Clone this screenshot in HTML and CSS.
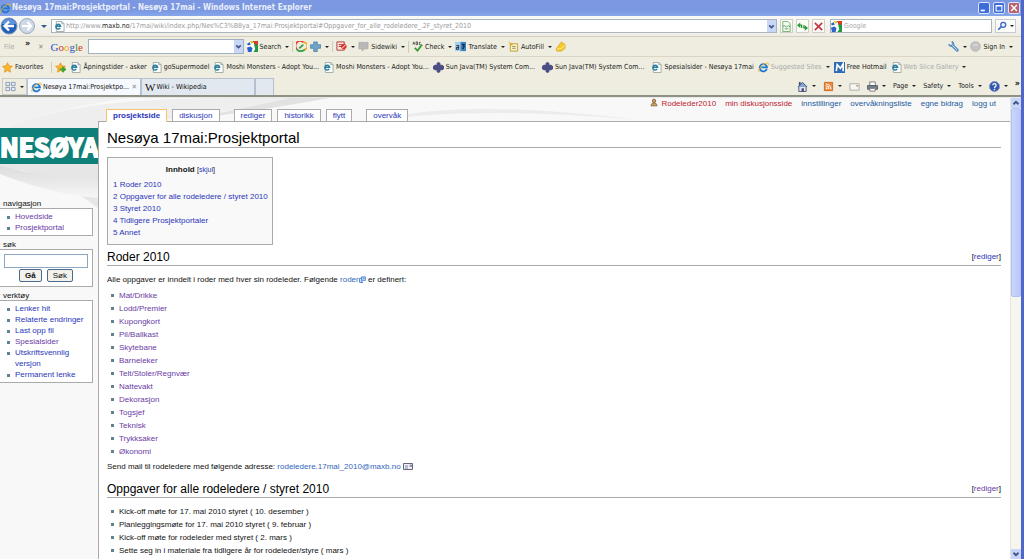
FILE: index.html
```html
<!DOCTYPE html>
<html lang="no">
<head>
<meta charset="utf-8">
<title>Nesøya 17mai:Prosjektportal - Nesøya 17mai</title>
<link rel="stylesheet" href="styles.css">
</head>
<body>
<svg class="defs" aria-hidden="true">
  <symbol id="ie" viewBox="0 0 12 12"><path d="M9.6 7.6A4 4 0 1 1 9.8 5.8H3.6" fill="none" stroke="#1d78cf" stroke-width="2"/><path d="M1.2 11C-.6 8.500 5 1 10.500 1.200 12 1.400 11.400 3 10.600 4" fill="none" stroke="#f0b429" stroke-width="1"/></symbol>
  <symbol id="page" viewBox="0 0 12 12"><path d="M2.500.5h6l2.500 2.500v8.500h-8.500z" fill="#fff" stroke="#9aa7a5"/><path d="M6.800 7.600A2.600 2.600 0 1 1 7.200 5.700H2.500" fill="none" stroke="#2a7f9f" stroke-width="1.600"/><path d="M8.500.5V3H11" fill="none" stroke="#9aa7a5"/></symbol>
  <symbol id="star" viewBox="0 0 12 12"><path d="M6 .8l1.600 3.400 3.800.5-2.800 2.600.7 3.800L6 9.300l-3.300 1.800.7-3.800L.6 4.700l3.800-.5z" fill="#fcb72c" stroke="#d98a12" stroke-width=".7"/></symbol>
  <symbol id="staradd" viewBox="0 0 12 12"><use href="#star"/><path d="M5 8h5M8 5.500L11 8 8 10.800" fill="none" stroke="#3aa52c" stroke-width="2"/></symbol>
  <symbol id="java" viewBox="0 0 12 12"><path d="M4 1l2-1 2 1v2h2l2 1.500v3L10 9H8v2l-2 1-2-1V9H2L0 7.500v-3L2 3h2z" fill="#4b4f86"/></symbol>
  <symbol id="hotmail" viewBox="0 0 12 12"><path d="M0 0h12v12H0z" fill="#2c6bb5"/><path d="M2.500 10l1-7L7 7l3-5v8" fill="none" stroke="#fff" stroke-width="1.800"/></symbol>
  <symbol id="gfav" viewBox="0 0 12 12"><path d="M0 0h12v12H0z" fill="#fff"/><path d="M6 0h6v6z" fill="#d93a2b"/><path d="M7 0h5v12H7l2-3-1-4z" fill="#1f9a42"/><path d="M7 0h5v4H9z" fill="#d93a2b"/><path d="M0 7l4-1 2 2-1 4H1z" fill="#2f62c9"/><path d="M0 3l3-2 1 3-3 1z" fill="#2f62c9"/><path d="M3 0h3l1 2-2 1z" fill="#f3bd26"/></symbol>
  <symbol id="swirl" viewBox="0 0 12 12"><path d="M1 9A5 5 0 0 1 8 1.500" fill="none" stroke="#e8432e" stroke-width="2"/><path d="M8 1.500a4 4 0 0 1 1 8" fill="none" stroke="#f4a51e" stroke-width="2"/><path d="M1 9c2 3 6 2 8.500.5M3.500 8L8 4" fill="none" stroke="#35a048" stroke-width="2"/></symbol>
  <symbol id="plus" viewBox="0 0 12 12"><path d="M4 1h4v3h3.500v4H8v3.500H4V8H.5V4H4z" fill="#6fa3c9" stroke="#3c759d" stroke-width=".7"/></symbol>
  <symbol id="block" viewBox="0 0 12 12"><path d="M1 1h8v9H1z" fill="#f5e3e0" stroke="#b0362e"/><path d="M3 4h4M3 6h4" stroke="#b0362e"/><circle cx="8.500" cy="6" r="3" fill="#d8382d"/><path d="M6.500 8l4-4" stroke="#fff"/></symbol>
  <symbol id="bubble" viewBox="0 0 12 12"><path d="M1 1.500h10v7H7L4.500 11V8.500H1z" fill="#b8b8b8" stroke="#9c9c9c" stroke-width=".6"/></symbol>
  <symbol id="check" viewBox="0 0 12 12"><path d="M1 4l1-3 1 3M4.500 1v3H6V1zM9.500 1.500H8V4h1.500" fill="none" stroke="#333" stroke-width=".8"/><path d="M3 7.500l3 3L11 4" fill="none" stroke="#3d9c3b" stroke-width="2"/></symbol>
  <symbol id="translate" viewBox="0 0 12 12"><path d="M0 1h12v10H0z" fill="#a9d0ef"/><path d="M6 1h6v10H6z" fill="#3c86c6"/><path d="M1.500 5h2.500v4H1.500V7H4M7.500 4h3.500M9 3v6M8 8c2 0 3-2 2-3" fill="none" stroke="#123"/></symbol>
  <symbol id="autofill" viewBox="0 0 12 12"><path d="M2.500 3h8v8h-8z" fill="#fff4b8" stroke="#b39a3d"/><path d="M4.500 6h4M4.500 8h4" stroke="#8b8b8b"/><path d="M.5 0l5 4-2 1z" fill="#e8a51c"/></symbol>
  <symbol id="marker" viewBox="0 0 12 12"><path d="M1 9l6-8 4 3v4l-4 3H2z" fill="#f6c927" stroke="#d39b13" stroke-width=".7"/><path d="M2 9l5-1 4-3" fill="none" stroke="#fff0a0"/></symbol>
  <symbol id="wrench" viewBox="0 0 12 12"><path d="M5 5l5 5" stroke="#5a91c3" stroke-width="3.500" stroke-linecap="round"/><path d="M1 3.500A3 3 0 0 0 5.500 5 3 3 0 0 0 4 .8" fill="none" stroke="#5a91c3" stroke-width="2"/><path d="M4 4l6 6" stroke="#cfe3f3"/></symbol>
  <symbol id="ball" viewBox="0 0 12 12"><circle cx="6" cy="6" r="5.300" fill="#c3c3c3" stroke="#a4a4a4" stroke-width=".6"/><path d="M2.500 5a4 3 0 0 1 7 0z" fill="#e2e2e2"/></symbol>
  <symbol id="home" viewBox="0 0 12 12"><path d="M2 6h8v5.500H2z" fill="#dfe6f2" stroke="#46536f"/><path d="M2 1h2v4H2z" fill="#46536f"/><path d="M1 6.500L6 1.500l5 5" fill="#8ba3cf" stroke="#2f4d86"/><path d="M5 8h2.500v3.500H5z" fill="#4a3f7a"/></symbol>
  <symbol id="rss" viewBox="0 0 12 12"><path d="M1.500 1.500h9v9h-9z" fill="#f0863a" stroke="#c96a24"/><circle cx="4" cy="8" r="1" fill="#fff"/><path d="M3 5.500a3.500 3.500 0 0 1 3.500 3.500M3 3.200A5.800 5.800 0 0 1 8.800 9" fill="none" stroke="#fff" stroke-width="1.100"/></symbol>
  <symbol id="mail" viewBox="0 0 12 12"><path d="M1 3h10v7H1z" fill="#f7f7f4" stroke="#aaa"/><path d="M8 4.500h2v1.500H8z" fill="#c77"/></symbol>
  <symbol id="printer" viewBox="0 0 12 12"><path d="M3 1h6v4H3z" fill="#fff" stroke="#777"/><path d="M.5 5h11v4H.5z" fill="#77808c" stroke="#525a66"/><path d="M3 8h6v3H3z" fill="#fff" stroke="#777"/></symbol>
  <symbol id="help" viewBox="0 0 12 12"><circle cx="6" cy="6" r="5.500" fill="#3457ae" stroke="#8495c4"/><path d="M4.200 4.500c0-2.200 3.600-2.200 3.600 0C7.800 6 6 6 6 7.500M6 8.500V10" fill="none" stroke="#fff" stroke-width="1.400"/></symbol>
  <symbol id="chev" viewBox="0 0 12 12"><path d="M3 4.500l3 3 3-3" fill="none" stroke="#3d5687" stroke-width="2.200"/></symbol>
  <symbol id="up" viewBox="0 0 12 12"><path d="M3 7.500l3-3 3 3" fill="none" stroke="#3d5687" stroke-width="2.200"/></symbol>
  <symbol id="compat" viewBox="0 0 12 12"><path d="M2 .5h5.500L10 3v8.500H2z" fill="#f4fbf2" stroke="#6fae6a"/><path d="M2 6l1.500-1L6 6.500 8 5l2 1.500M4 8.500h4" fill="none" stroke="#5b9f57"/></symbol>
  <symbol id="refresh" viewBox="0 0 12 12"><path d="M5 7.500V4.500H3M7.500 4.500v3h2" fill="none" stroke="#2b9a38" stroke-width="1.500"/><path d="M0 4.500L3.500 1.500v6zM12 7.500L8.500 4.500v6z" fill="#2b9a38"/></symbol>
  <symbol id="stop" viewBox="0 0 12 12"><path d="M2 2l8 8M10 2l-8 8" stroke="#c8323e" stroke-width="1.700"/></symbol>
  <symbol id="lens" viewBox="0 0 12 12"><circle cx="7.500" cy="4.500" r="3" fill="#e8f1ff" stroke="#3b63c4" stroke-width="1.500"/><path d="M5.200 6.800L1.500 10.500" stroke="#3b63c4" stroke-width="2"/></symbol>
  <symbol id="quad" viewBox="0 0 12 12"><path d="M1 1.500h4v3.500H1zM7 1.500h4v3.500H7zM1 7h4v3.500H1zM7 7h4v3.500H7z" fill="#e9effa" stroke="#8796b4"/></symbol>
  <symbol id="back" viewBox="0 0 18 18"><circle cx="9" cy="9" r="8" fill="#2160ba" stroke="#8095b5"/><path d="M2 7a7 5 0 0 1 14 0z" fill="#5f94dc"/><path d="M14 9H5M9 4.500L4.500 9 9 13.500" fill="none" stroke="#fff" stroke-width="2.300"/></symbol>
  <symbol id="fwd" viewBox="0 0 18 18"><circle cx="9" cy="9" r="7.500" fill="#cfd8e6" stroke="#9aa9c0"/><path d="M4 9h9M9.500 5L13 9l-3.500 4" fill="none" stroke="#fff" stroke-width="2.200"/></symbol>
  <symbol id="user" viewBox="0 0 12 12"><circle cx="6" cy="3.500" r="2.500" fill="#e3a062" stroke="#5c4020"/><path d="M1.500 11c0-6 9-6 9 0z" fill="#c7a55d" stroke="#6d4b1d"/></symbol>
  <symbol id="ext" viewBox="0 0 12 12"><path d="M7 11H1V4h4" fill="none" stroke="#3374c9" stroke-width="1.500"/><path d="M4.500 1.500h6.500v6H7L4 9.500z" fill="#cfe3fb" stroke="#2a6fd0" stroke-width="1.300"/><path d="M6 6.500l3-3H6.500" fill="none" stroke="#2a6fd0"/></symbol>
</svg>

<header class="chrome">
  <div class="titlebar">
    <svg class="i"><use href="#ie"/></svg>
    <span class="title">Nesøya 17mai:Prosjektportal - Nesøya 17mai - Windows Internet Explorer</span>
    <div class="winbtns">
      <button class="wb" aria-label="Minimize"><svg viewBox="0 0 12 12"><path d="M2 9h5" stroke="#fff" stroke-width="2"/></svg></button>
      <button class="wb" aria-label="Maximize"><svg viewBox="0 0 12 12"><path d="M2.500 3h7v6.500h-7zM2 3.500h8" fill="none" stroke="#fff" stroke-width="1.300"/></svg></button>
      <button class="wb close" aria-label="Close"><svg viewBox="0 0 12 12"><path d="M2.500 2.500l7 7M9.500 2.500l-7 7" stroke="#fff" stroke-width="1.800"/></svg></button>
    </div>
  </div>

  <div class="address">
    <button class="nav" aria-label="Back"><svg><use href="#back"/></svg></button>
    <button class="nav" aria-label="Forward"><svg><use href="#fwd"/></svg></button>
    <button class="drop" aria-label="Recent pages"></button>
    <div class="field url">
      <svg class="i"><use href="#page"/></svg>
      <span class="urltext">http://www.<b>maxb.no</b>/17mai/wiki/index.php/Nes%C3%B8ya_17mai:Prosjektportal#Oppgaver_for_alle_rodeledere_.2F_styret_2010</span>
      <button class="combo" aria-label="Show addresses"><svg><use href="#chev"/></svg></button>
    </div>
    <button class="sq" aria-label="Compatibility view"><svg><use href="#compat"/></svg></button>
    <button class="sq" aria-label="Refresh"><svg><use href="#refresh"/></svg></button>
    <button class="sq" aria-label="Stop"><svg><use href="#stop"/></svg></button>
    <label class="field search"><svg class="i"><use href="#gfav"/></svg><input type="text" placeholder="Google" aria-label="Search the web"></label>
    <button class="go" aria-label="Search"><svg><use href="#lens"/></svg><i class="tri"></i></button>
  </div>

  <div class="google">
    <button class="file">File</button>
    <span class="more">»</span>
    <span class="closex">✕</span>
    <span class="glogo"><span class="c1">G</span><span class="c2">o</span><span class="c3">o</span><span class="c1">g</span><span class="c4">l</span><span class="c2">e</span></span>
    <div class="field gbox"><input type="text" aria-label="Google search"><button class="combo" aria-label="History"><svg><use href="#chev"/></svg></button></div>
    <button class="t"><svg class="i"><use href="#gfav"/></svg>Search<i class="tri"></i></button>
    <button class="t sep" aria-label="Chrome"><svg class="i"><use href="#swirl"/></svg></button>
    <button class="t" aria-label="Add"><svg class="i"><use href="#plus"/></svg><i class="tri"></i></button>
    <button class="t sep" aria-label="Popups"><svg class="i"><use href="#block"/></svg><i class="tri"></i></button>
    <button class="t"><svg class="i"><use href="#bubble"/></svg>Sidewiki<i class="tri"></i></button>
    <button class="t sep"><svg class="i"><use href="#check"/></svg>Check<i class="tri"></i></button>
    <button class="t"><svg class="i"><use href="#translate"/></svg>Translate<i class="tri"></i></button>
    <button class="t"><svg class="i"><use href="#autofill"/></svg>AutoFill<i class="tri"></i></button>
    <button class="t" aria-label="Highlight"><svg class="i"><use href="#marker"/></svg></button>
    <button class="t end" aria-label="Settings"><svg class="i"><use href="#wrench"/></svg><i class="tri"></i></button>
    <button class="t"><svg class="i"><use href="#ball"/></svg>Sign In<i class="tri"></i></button>
  </div>

  <nav class="favs">
    <button class="t"><svg class="i"><use href="#star"/></svg>Favorites</button>
    <button class="t sep" aria-label="Add favorite"><svg class="i"><use href="#staradd"/></svg></button>
    <a href="#" class="t"><svg class="i"><use href="#page"/></svg>Åpningstider - asker</a>
    <a href="#" class="t"><svg class="i"><use href="#page"/></svg>goSupermodel</a>
    <a href="#" class="t"><svg class="i"><use href="#page"/></svg>Moshi Monsters - Adopt You...</a>
    <a href="#" class="t"><svg class="i"><use href="#page"/></svg>Moshi Monsters - Adopt You...</a>
    <a href="#" class="t sun"><svg class="i"><use href="#java"/></svg>Sun Java(TM) System Com...</a>
    <a href="#" class="t sun"><svg class="i"><use href="#java"/></svg>Sun Java(TM) System Com...</a>
    <a href="#" class="t"><svg class="i"><use href="#page"/></svg>Spesialsider - Nesøya 17mai</a>
    <a href="#" class="t dim"><svg class="i"><use href="#ie"/></svg>Suggested Sites<i class="tri"></i></a>
    <a href="#" class="t"><svg class="i"><use href="#hotmail"/></svg>Free Hotmail</a>
    <a href="#" class="t dim"><svg class="i"><use href="#page"/></svg>Web Slice Gallery<i class="tri"></i></a>
  </nav>

  <div class="tabs">
    <button class="quick" aria-label="Quick tabs"><svg class="i"><use href="#quad"/></svg><i class="tri"></i></button>
    <button class="tab on"><svg class="i"><use href="#ie"/></svg><span>Nesøya 17mai:Prosjektpo...</span><span class="x">✕</span></button>
    <button class="tab"><span class="w">W</span>Wiki - Wikipedia</button>
    <button class="tab new" aria-label="New tab"></button>
    <div class="cmds">
      <button class="t" aria-label="Home"><svg class="i"><use href="#home"/></svg><i class="tri"></i></button>
      <button class="t" aria-label="Feeds"><svg class="i"><use href="#rss"/></svg><i class="tri"></i></button>
      <button class="t" aria-label="Mail"><svg class="i"><use href="#mail"/></svg></button>
      <button class="t" aria-label="Print"><svg class="i"><use href="#printer"/></svg><i class="tri"></i></button>
      <button class="t">Page<i class="tri"></i></button>
      <button class="t">Safety<i class="tri"></i></button>
      <button class="t">Tools<i class="tri"></i></button>
      <button class="t" aria-label="Help"><svg class="i"><use href="#help"/></svg><i class="tri"></i></button>
      <span class="more">»</span>
    </div>
  </div>
</header>

<div class="view">
  <div class="wiki">
    <svg class="swoosh" viewBox="0 0 1010 200" preserveAspectRatio="xMinYMin slice" aria-hidden="true">
      <defs>
        <linearGradient id="fade" x1="0" y1="0" x2="0" y2="1"><stop offset="0" stop-color="#dcdcdc"/><stop offset="1" stop-color="#f6f6f6"/></linearGradient>
      </defs>
      <path d="M0 0H130Q40 12 0 34z" fill="#f1f1f1"/>
      <path d="M0 34Q60 0 230 0H330Q160 20 98 34H0z" fill="#eeeeee"/>
      <path d="M180 22Q240 16 330 0H290Q230 14 180 22z" fill="#e2e2e2"/>
      <path d="M380 22Q460 0 640 22Q480 8 380 22z" fill="#ececec"/>
      <path d="M0 66H98V110Q40 66 0 72z" fill="#e6e6e6"/>
      <path d="M0 68Q50 80 98 82V100Q50 96 0 76z" fill="url(#fade)"/>
    </svg>
    <aside class="side">
      <a href="#" class="logo">NESØYA</a>
      <h5>navigasjon</h5>
      <ul class="box">
        <li><a href="#" class="v">Hovedside</a></li>
        <li><a href="#" class="v">Prosjektportal</a></li>
      </ul>
      <h5><label for="q">søk</label></h5>
      <form class="box find"><input id="q" type="text"><div><button type="button"><b>Gå</b></button><button type="button">Søk</button></div></form>
      <h5>verktøy</h5>
      <ul class="box">
        <li><a href="#">Lenker hit</a></li>
        <li><a href="#">Relaterte endringer</a></li>
        <li><a href="#">Last opp fil</a></li>
        <li><a href="#" class="v">Spesialsider</a></li>
        <li><a href="#">Utskriftsvennlig versjon</a></li>
        <li><a href="#">Permanent lenke</a></li>
      </ul>
    </aside>
    <div class="col">
      <nav class="personal">
        <svg class="i"><use href="#user"/></svg>
        <a href="#" class="red">Rodeleder2010</a>
        <a href="#" class="red">min diskusjonsside</a>
        <a href="#">innstillinger</a>
        <a href="#">overvåkningsliste</a>
        <a href="#">egne bidrag</a>
        <a href="#">logg ut</a>
      </nav>
      <nav class="views">
        <a href="#" class="sel">prosjektside</a>
        <a href="#" class="talk">diskusjon</a>
        <a href="#">rediger</a>
        <a href="#">historikk</a>
        <a href="#" class="move">flytt</a>
        <a href="#">overvåk</a>
      </nav>
      <main class="content">
        <h1>Nesøya 17mai:Prosjektportal</h1>
        <div class="toc">
          <p><b>Innhold</b> <small>[<a href="#">skjul</a>]</small></p>
          <a href="#">1 Roder 2010</a>
          <a href="#">2 Oppgaver for alle rodeledere / styret 2010</a>
          <a href="#">3 Styret 2010</a>
          <a href="#">4 Tidligere Prosjektportaler</a>
          <a href="#">5 Annet</a>
        </div>
        <h2>Roder 2010 <span>[<a href="#">rediger</a>]</span></h2>
        <p class="intro">Alle oppgaver er inndelt i roder med hver sin rodeleder. Følgende <a href="#" class="e">roder<svg class="s"><use href="#ext"/></svg></a> er definert:</p>
        <ul class="list">
          <li><a href="#">Mat/Drikke</a></li>
          <li><a href="#">Lodd/Premier</a></li>
          <li><a href="#">Kupongkort</a></li>
          <li><a href="#">Pil/Ballkast</a></li>
          <li><a href="#">Skytebane</a></li>
          <li><a href="#">Barneleker</a></li>
          <li><a href="#">Telt/Stoler/Regnvær</a></li>
          <li><a href="#">Nattevakt</a></li>
          <li><a href="#">Dekorasjon</a></li>
          <li><a href="#">Togsjef</a></li>
          <li><a href="#">Teknisk</a></li>
          <li><a href="#">Trykksaker</a></li>
          <li><a href="#">Økonomi</a></li>
        </ul>
        <p class="send">Send mail til rodeledere med følgende adresse: <a href="#" class="e">rodeledere.17mai_2010@maxb.no <svg class="env" viewBox="0 0 10 7"><path d="M.5.5h9v6h-9z" fill="#eef" stroke="#667"/><path d="M2 3h3M2 5h3M7 2h1.500v1.500H7z" fill="none" stroke="#889"/></svg></a></p>
        <h2>Oppgaver for alle rodeledere / styret 2010 <span>[<a href="#" class="v">rediger</a>]</span></h2>
        <ul class="list">
          <li>Kick-off møte for 17. mai 2010 styret ( 10. desember )</li>
          <li>Planleggingsmøte for 17. mai 2010 styret ( 9. februar )</li>
          <li>Kick-off møte for rodeleder med styret ( 2. mars )</li>
          <li>Sette seg in i materiale fra tidligere år for rodeleder/styre ( mars )</li>
        </ul>
      </main>
    </div>
  </div>
  <div class="scroll" aria-hidden="true">
    <div class="sb"><svg><use href="#up"/></svg></div>
    <div class="thumb"></div>
    <div class="sb low"><svg><use href="#chev"/></svg></div>
  </div>
</div>
</body>
</html>
```

FILE: styles.css
```css
* { box-sizing: border-box; }
body {
  margin: 0;
  height: 100vh;
  overflow: hidden;
  display: flex;
  flex-direction: column;
  border-right: 3px solid #4f66cf;
  background: #fff;
  font: 8px/13px "Liberation Sans", Arial, sans-serif;
  color: #111;
}
button, input { font: inherit; color: inherit; margin: 0; padding: 0; border: 0; background: none; }
a { color: #2a35b8; text-decoration: none; }
svg { display: block; }
.defs { position: absolute; width: 0; height: 0; }
.i { width: 11px; height: 11px; flex: none; }

.chrome {
  flex: none;
  background: #efede0;
  border-bottom: 2px solid #8e9186;
  font: 7px/12px "DejaVu Sans Condensed", Tahoma, sans-serif;
  white-space: nowrap;
}
.titlebar {
  height: 16px;
  display: flex;
  align-items: center;
  gap: 1px;
  margin-right: -3px;
  padding-right: 4px;
  background: linear-gradient(#7d98e2, #7a97e0 60%, #86a6ea);
  color: #e9effc;
}
.title { font: bold 8px/14px "DejaVu Sans Condensed", "Trebuchet MS", sans-serif; }
.winbtns { margin-left: auto; display: flex; gap: 3px; }
.wb { width: 12px; height: 12px; border: 1px solid #dbe4fa; border-radius: 2px; background: #3f6cdb; }
.wb svg { width: 10px; height: 10px; }
.close { background: #b8626e; }

.address {
  height: 21px;
  display: flex;
  align-items: center;
  padding-right: 5px;
  background: linear-gradient(#f9f9f6, #efede3);
  border-bottom: 1px solid #d3d0c2;
}
.nav svg { width: 18px; height: 18px; }
.drop { width: 15px; height: 12px; }
.drop::after, .tri { content: ""; display: block; width: 0; border: 2px solid transparent; border-top-color: #222; border-bottom: 0; }
.drop::after { border-width: 3px; border-bottom: 0; border-top-color: #2b5c96; margin: 0 auto; }
.field { display: flex; align-items: center; height: 14px; background: #fff; border: 1px solid #aab4bd; }
.url { flex: 1; min-width: 0; padding-left: 2px; gap: 1px; color: #9b9b9b; }
.urltext { flex: 1; overflow: hidden; }
.urltext b { color: #222; font-weight: normal; }
.combo { width: 9px; height: 12px; background: #c9d7f7; }
.combo svg { width: 9px; height: 9px; }
.sq { width: 13px; height: 14px; margin-left: 3px; border: 1px solid #cfcfc6; background: #fbfbf8; }
.sq svg { width: 11px; height: 11px; }
.search { width: 162px; margin-left: 5px; gap: 2px; }
.search input { flex: 1; min-width: 0; outline: 0; }
.search input::placeholder { color: #aaa; }
.go { display: flex; align-items: center; justify-content: space-around; width: 21px; height: 14px; margin-left: 3px; border: 1px solid #c4cbd4; background: #fbfbf8; }
.go svg { width: 10px; height: 10px; }

.t { display: flex; align-items: center; gap: 2px; color: #1a1a1a; flex: none; }
.t .tri { margin-left: 2px; }
.sep { border-left: 1px solid #cfccbe; padding-left: 3px; }
.google { height: 20px; display: flex; align-items: center; gap: 3px; padding: 0 8px 0 4px; border-bottom: 1px solid #d8d5c7; }
.file { width: 18px; text-align: left; color: #aaa; }
.more { align-self: flex-start; font-size: 9px; font-weight: bold; }
.closex { color: #888; margin-left: 5px; }
.glogo { width: 34px; margin-left: 4px; font: 11px/14px "Liberation Serif", serif; -webkit-text-stroke: 0; }
.c1 { color: #2b50c8; } .c2 { color: #d23a2c; } .c3 { color: #e9b01c; } .c4 { color: #2a9a3e; }
.gbox { width: 156px; height: 15px; border-color: #9fb0c2; }
.gbox input { flex: 1; min-width: 0; }
.gbox .combo { height: 13px; }
.google .end { margin-left: auto; }

.favs { height: 20px; display: flex; align-items: center; gap: 4px; padding-left: 2px; }
.favs .sep { margin-left: 4px; }
.sun { margin-right: 3px; }
.favs .dim { color: #aaa; }
.tabs { height: 18px; display: flex; align-items: stretch; }
.quick { width: 25px; margin: 1px 0 0 2px; display: flex; align-items: center; justify-content: space-around; border: 1px solid #c9ccc8; }
.tab { display: flex; align-items: center; gap: 1px; width: 114px; margin-top: 1px; padding: 0 3px; border: 1px solid #b6c1cf; border-bottom: 0; background: #e2e8f0; }
.tab.on { background: #f6f9fd; }
.tab .x { margin-left: auto; color: #888; }
.tab .w { font: 11px/12px "Liberation Serif", serif; }
.tab.new { width: 19px; }
.cmds { margin-left: auto; display: flex; align-items: center; gap: 7px; padding-right: 1px; }

.view { flex: 1; min-height: 0; display: flex; border-top: 1px solid #e8e8e4; }
.wiki { flex: 1; min-width: 0; position: relative; display: flex; background: #f8f8f8; overflow: hidden; }
.swoosh { position: absolute; top: 0; left: 0; width: 100%; height: 200px; }
.side { position: relative; width: 98px; flex: none; padding-top: 30px; }
.logo {
  display: block;
  height: 36px;
  margin-bottom: 35px;
  overflow: hidden;
  background: #0e7f79;
  color: #fff;
  text-align: center;
  font: bold 25px/36px "Noto Sans CJK JP", sans-serif;
  -webkit-text-stroke: 2px #fff;
}
.side h5 { margin: 0; padding-left: 3px; font-size: 8px; line-height: 9px; font-weight: normal; }
.box { margin: 0 5px 4px 0; padding: 2px 0 2px 7px; border: 1px solid #aaa; border-left: 0; background: #fff; list-style: none; line-height: 11px; }
li { position: relative; }
.box li { padding-left: 8px; }
li::before { content: ""; position: absolute; left: 0; top: 5px; width: 3px; height: 3px; background: #5f8291; }
.v, .list a { color: #6a3ba5; }
.find { padding: 4px; }
.find input { display: block; width: 100%; height: 14px; border: 1px solid #8ba7c4; background: #fff; }
.find div { display: flex; justify-content: center; gap: 5px; margin-top: 1px; }
.find button { height: 13px; padding: 0 5px; border: 1px solid #4a6a90; border-radius: 2px; background: #f2f1ec; line-height: 11px; }

.col { position: relative; flex: 1; min-width: 0; display: flex; flex-direction: column; }
.personal { display: flex; justify-content: flex-end; gap: 9px; height: 11px; padding-right: 14px; line-height: 11px; }
.personal a { color: #215a9c; }
.personal .red { color: #c01c30; }
.personal .i { width: 8px; height: 9px; margin-right: -6px; }
.views { display: flex; gap: 5px; height: 12px; padding-left: 8px; line-height: 11px; }
.views a { padding: 0 6px; border: 1px solid #aaa; border-bottom: 0; background: #fff; }
.views .sel { position: relative; height: 13px; font-weight: bold; border-color: #f5c46c; }
.views .talk, .views .move { margin-right: 9px; }
.content { flex: 1; padding: 6px 9px 0 8px; border: 1px solid #aaa; border-right: 0; border-bottom: 0; background: #fff; }
h1, h2 { margin: 0; font-weight: normal; color: #000; border-bottom: 1px solid #aaa; }
h1 { font-size: 15px; line-height: 19px; }
h2 { display: flex; justify-content: space-between; align-items: center; font-size: 12px; line-height: 16px; }
h2 span { font-size: 8px; }
.toc { width: max-content; margin: 9px 0 4px; padding: 6px 4px 5px 5px; border: 1px solid #aaa; background: #f9f9f9; line-height: 12px; }
.toc p { margin: 0 0 3px; text-align: center; }
.toc small { font-size: 7px; }
.toc > a { display: block; }
.intro { margin: 7px 0 3px; }
.e { color: #3366bb; }
.e svg { display: inline-block; vertical-align: -1px; }
.s { width: 7px; height: 7px; }
.env { width: 10px; height: 7px; }
.list { margin: 0; padding: 0 0 0 4px; list-style: none; }
.list li { padding-left: 8px; }
.send { margin: 2px 0 8px; }
h2 + .list { margin-top: 7px; }

.scroll { width: 11px; flex: none; display: flex; flex-direction: column; background: #f6f6ee; border-left: 1px solid #e6e6e0; }
.sb { height: 10px; flex: none; background: #c8d5fb; }
.sb svg { width: 10px; height: 10px; }
.thumb { height: 41%; border: 1px solid #b2c3f4; border-radius: 2px; background: linear-gradient(90deg, #c8d6fc, #b9c9f6); }
.low { margin-top: auto; }
```
